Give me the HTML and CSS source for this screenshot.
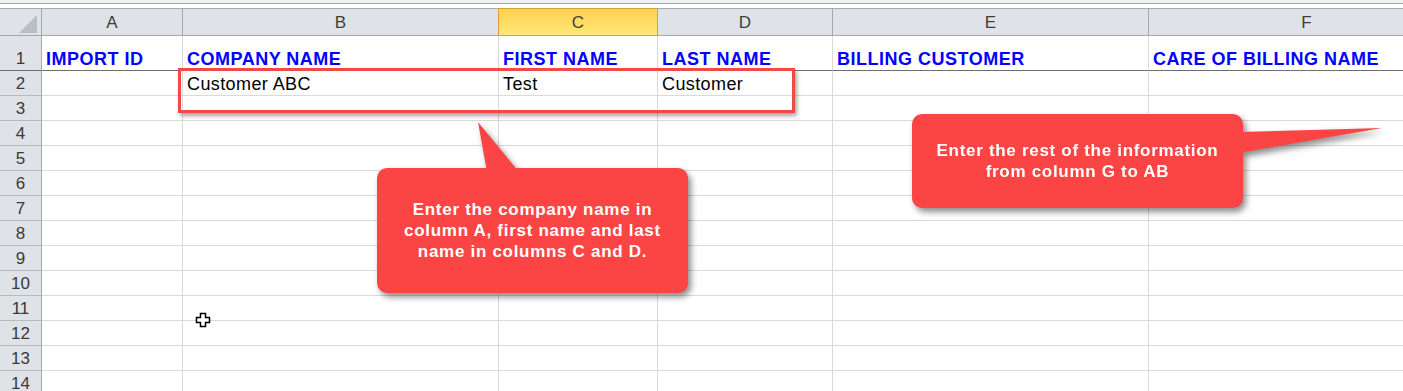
FILE: index.html
```html
<!DOCTYPE html>
<html lang="en">
<head>
    <meta charset="UTF-8">
    <meta name="viewport" content="width=device-width, initial-scale=1.0">
    <title>Customer Import Sheet</title>
    <link rel="stylesheet" href="styles.css">
</head>
<body>
    <div class="sheet">
        <div class="topbar"></div>
        <div class="grid">
            <div class="corner"><span class="tri"></span></div>
            <div class="ch">A</div>
            <div class="ch">B</div>
            <div class="ch sel">C</div>
            <div class="ch">D</div>
            <div class="ch">E</div>
            <div class="ch">F</div>
            <div class="ch"></div>

            <div class="rh r1">1</div>
            <div class="c r1 head">IMPORT ID</div>
            <div class="c r1 head">COMPANY NAME</div>
            <div class="c r1 head">FIRST NAME</div>
            <div class="c r1 head">LAST NAME</div>
            <div class="c r1 head">BILLING CUSTOMER</div>
            <div class="c r1 head">CARE OF BILLING NAME</div>
            <div class="c r1"></div>

            <div class="rh">2</div>
            <div class="c"></div>
            <div class="c">Customer ABC</div>
            <div class="c">Test</div>
            <div class="c">Customer</div>
            <div class="c"></div>
            <div class="c"></div>
            <div class="c"></div>

            <div class="rh">3</div><div class="c"></div><div class="c"></div><div class="c"></div><div class="c"></div><div class="c"></div><div class="c"></div><div class="c"></div>
            <div class="rh">4</div><div class="c"></div><div class="c"></div><div class="c"></div><div class="c"></div><div class="c"></div><div class="c"></div><div class="c"></div>
            <div class="rh">5</div><div class="c"></div><div class="c"></div><div class="c"></div><div class="c"></div><div class="c"></div><div class="c"></div><div class="c"></div>
            <div class="rh">6</div><div class="c"></div><div class="c"></div><div class="c"></div><div class="c"></div><div class="c"></div><div class="c"></div><div class="c"></div>
            <div class="rh">7</div><div class="c"></div><div class="c"></div><div class="c"></div><div class="c"></div><div class="c"></div><div class="c"></div><div class="c"></div>
            <div class="rh">8</div><div class="c"></div><div class="c"></div><div class="c"></div><div class="c"></div><div class="c"></div><div class="c"></div><div class="c"></div>
            <div class="rh">9</div><div class="c"></div><div class="c"></div><div class="c"></div><div class="c"></div><div class="c"></div><div class="c"></div><div class="c"></div>
            <div class="rh">10</div><div class="c"></div><div class="c"></div><div class="c"></div><div class="c"></div><div class="c"></div><div class="c"></div><div class="c"></div>
            <div class="rh">11</div><div class="c"></div><div class="c"></div><div class="c"></div><div class="c"></div><div class="c"></div><div class="c"></div><div class="c"></div>
            <div class="rh">12</div><div class="c"></div><div class="c"></div><div class="c"></div><div class="c"></div><div class="c"></div><div class="c"></div><div class="c"></div>
            <div class="rh">13</div><div class="c"></div><div class="c"></div><div class="c"></div><div class="c"></div><div class="c"></div><div class="c"></div><div class="c"></div>
            <div class="rh">14</div><div class="c"></div><div class="c"></div><div class="c"></div><div class="c"></div><div class="c"></div><div class="c"></div><div class="c"></div>
        </div>

        <!-- annotations drawn over the sheet -->
        <div class="highlight"></div>

        <div class="callout callout-company">
            <svg class="tail" width="50" height="52" viewBox="0 0 50 52">
                <polygon points="6,2 15,52 47,52" fill="#fb4444"/>
            </svg>
            <p>Enter the company name in<br>column A, first name and last<br>name in columns C and D.</p>
        </div>

        <div class="callout callout-rest">
            <svg class="tail" width="150" height="35" viewBox="0 0 150 35">
                <polygon points="0,8 143,4 0,29" fill="#fb4444"/>
            </svg>
            <p>Enter the rest of the information<br>from column G to AB</p>
        </div>

        <svg class="cursor" width="16" height="16" viewBox="0 0 16 16">
            <path d="M5.5 1.5h5v4h4v5h-4v4h-5v-4h-4v-5h4z" fill="#fff" stroke="#000" stroke-width="1.5"/>
        </svg>
    </div>
</body>
</html>
```

FILE: styles.css
```css
body {
    margin: 0;
    background-color: #fff;
    font-family: "Liberation Sans", Arial, sans-serif;
    overflow: hidden;
}
.sheet {
    position: relative;
    width: 1403px;
    height: 391px;
    overflow: hidden;
}
.topbar {
    height: 8px;
    background: linear-gradient(#eef0f2 0, #eef0f2 3px, #a3a3a3 3px, #a3a3a3 4px, #fff 4px);
}
.grid {
    display: grid;
    grid-template-columns: 42px 141px 316px 159px 175px 316px 316px 316px;
    grid-template-rows: 28px 35px repeat(13, 25px);
}
.grid > div {
    box-sizing: border-box;
    border-right: 1px solid #d9d9d9;
    border-bottom: 1px solid #d9d9d9;
    display: flex;
    align-items: flex-end;
    white-space: nowrap;
}
.corner {
    position: relative;
    background-color: #dfe2e7;
    border-color: #a2a9b1 !important;
    border-top: 1px solid #b9bec4;
}
.tri {
    position: absolute;
    left: 19px;
    top: 6px;
    width: 18px;
    height: 18px;
    background-color: #b8bec5;
    clip-path: polygon(100% 0, 100% 100%, 0 100%);
}
.ch {
    background-color: #dfe2e7;
    border-color: #a2a9b1 !important;
    border-top: 1px solid #b9bec4;
    justify-content: center;
    align-items: center !important;
    font-size: 17px;
    color: #3e3e3e;
    padding-top: 1px;
}
.ch.sel {
    background: linear-gradient(#ffd04f, #ffe878);
    border-color: #e09d3b !important;
    box-shadow: -1px 0 0 #e09d3b;
}
.rh {
    background-color: #dfe2e7;
    border-right-color: #a2a9b1 !important;
    border-bottom-color: #b3bac2 !important;
    justify-content: center;
    font-size: 17px;
    line-height: 20px;
    color: #3a3a3a;
    padding-bottom: 1px;
}
.c {
    font-size: 18px;
    line-height: 20px;
    letter-spacing: 0.4px;
    color: #000;
    padding: 0 0 1px 4px;
}
.head {
    font-weight: bold;
    color: #0000ff;
    letter-spacing: 0.5px;
}
.r1 {
    border-bottom-color: #6e6e6e !important;
}
.highlight {
    position: absolute;
    left: 178px;
    top: 68px;
    width: 617px;
    height: 45px;
    box-sizing: border-box;
    border: 3px solid #f24848;
    box-shadow: 2px 3px 4px rgba(0, 0, 0, 0.35);
}
.callout {
    position: absolute;
    box-sizing: border-box;
    background-color: #fb4444;
    border-radius: 10px;
    display: flex;
    align-items: center;
    justify-content: center;
    filter: drop-shadow(3px 4px 3px rgba(0, 0, 0, 0.45));
}
.callout p {
    position: relative;
    margin: 0;
    color: #fff;
    font-weight: bold;
    font-size: 17px;
    line-height: 21px;
    letter-spacing: 0.7px;
    text-align: center;
}
.callout .tail {
    position: absolute;
    display: block;
}
.callout-company {
    left: 377px;
    top: 168px;
    width: 311px;
    height: 125px;
}
.callout-company .tail {
    left: 95px;
    top: -48px;
}
.callout-rest {
    left: 912px;
    top: 114px;
    width: 331px;
    height: 94px;
}
.callout-rest .tail {
    left: 327px;
    top: 10px;
}
.cursor {
    position: absolute;
    left: 195px;
    top: 312px;
}
```
